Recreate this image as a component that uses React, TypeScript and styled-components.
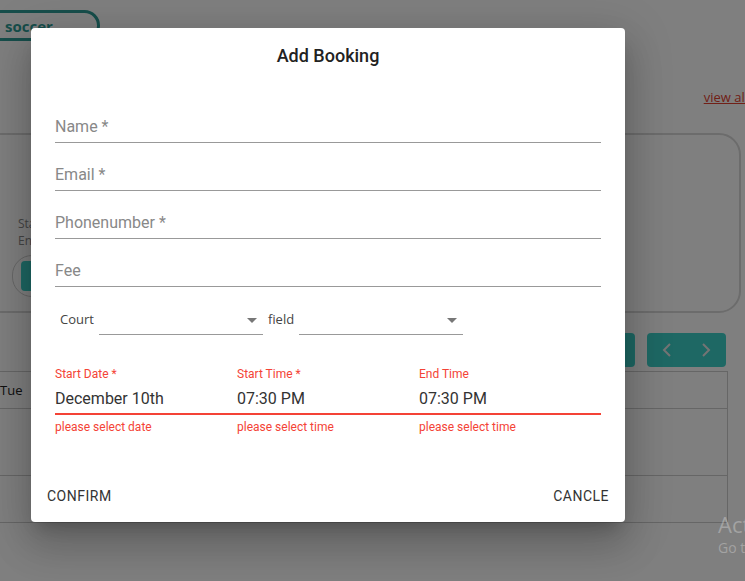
import { createGlobalStyle, styled } from "styled-components";

const GlobalStyle = createGlobalStyle`
  html, body {
    margin: 0;
    padding: 0;
    background: #fff;
  }
  body {
    font-family: Roboto, "Liberation Sans", sans-serif;
  }
`;

const TEAL = "#3cd0c8";
const TEAL_DARK = "#2e9c96";
const ERROR = "#f44336";

/* ---------- background page (dimmed behind the dialog) ---------- */

const Page = styled.div`
  position: relative;
  width: 745px;
  height: 581px;
  overflow: hidden;
  background: #fff;
  font-family: "Open Sans", "Liberation Sans", sans-serif;
`;

const PageBody = styled.div`
  display: flex;
  flex-flow: column nowrap;
  padding-top: 10px;
`;

const SportPill = styled.div`
  box-sizing: border-box;
  width: 122px;
  height: 31px;
  margin-left: -22px;
  border: 3px solid ${TEAL_DARK};
  border-radius: 16px;
  display: flex;
  align-items: center;
  padding-left: 24px;
  font-weight: 700;
  font-size: 15px;
  color: ${TEAL_DARK};
`;

const ViewAllRow = styled.div`
  display: flex;
  justify-content: flex-end;
  margin-top: 47px;
  margin-right: -3px;

  a {
    font-size: 13px;
    color: #e2402e;
    text-decoration: underline;
  }
`;

const SummaryCard = styled.div`
  box-sizing: border-box;
  height: 180px;
  margin: 27px 4px 0 -24px;
  border: 2px solid #d8d8d8;
  border-radius: 22px;
  display: flex;
  flex-flow: column nowrap;
  padding: 80px 0 0 40px;
  font-size: 12px;
  color: #888;
  line-height: 17px;
`;

const CardAction = styled.div`
  margin: 6px 0 0 -6px;
  width: 90px;
  height: 40px;
  border-radius: 20px;
  border: 1px solid #d0d0d0;
  display: flex;
  align-items: center;
  padding-left: 8px;

  span {
    display: block;
    width: 60px;
    height: 30px;
    border-radius: 4px;
    background: ${TEAL};
  }
`;

const Toolbar = styled.div`
  display: flex;
  justify-content: flex-end;
  gap: 12px;
  margin: 20px 19px 0 0;
`;

const TealButton = styled.div<{ $width: number }>`
  width: ${({ $width }) => $width}px;
  height: 34px;
  border-radius: 4px;
  background: ${TEAL};
  display: flex;
  align-items: center;
  justify-content: space-around;
  color: #e8e8e8;
`;

const Table = styled.div`
  display: flex;
  flex-flow: column nowrap;
  margin: 4px 17px 0 0;
  border-right: 1px solid #ccc;
  border-top: 1px solid #ccc;
  height: 150px;
`;

const TableRow = styled.div<{ $height: number }>`
  flex: none;
  height: ${({ $height }) => $height}px;
  border-bottom: 1px solid #ccc;
  display: flex;
  align-items: center;
  font-size: 13px;
  color: #222;
  padding-right: 16px;
`;

const Watermark = styled.div`
  position: absolute;
  left: 718px;
  top: 510px;
  color: rgba(255, 255, 255, 0.28);
  font-family: "Open Sans", "Liberation Sans", sans-serif;
  white-space: nowrap;
  z-index: 3;

  div:first-child {
    font-size: 22px;
    line-height: 28px;
  }
  div:last-child {
    font-size: 14px;
    line-height: 20px;
  }
`;

/* ---------- dialog ---------- */

const Backdrop = styled.div`
  position: absolute;
  inset: 0;
  background: rgba(0, 0, 0, 0.5);
  z-index: 1;
`;

const Dialog = styled.div`
  position: absolute;
  left: 31px;
  top: 28px;
  width: 594px;
  height: 494px;
  box-sizing: border-box;
  background: #fff;
  border-radius: 4px;
  z-index: 2;
  display: flex;
  flex-flow: column nowrap;
  box-shadow: 0 11px 15px -7px rgba(0, 0, 0, 0.2),
    0 24px 38px 3px rgba(0, 0, 0, 0.14), 0 9px 46px 8px rgba(0, 0, 0, 0.12);
  font-family: Roboto, "Liberation Sans", sans-serif;
`;

const Title = styled.h2`
  margin: 0;
  padding: 16px 24px 0;
  text-align: center;
  font-size: 18px;
  font-weight: 500;
  line-height: 24px;
  color: #222;
`;

const Content = styled.div`
  display: flex;
  flex-flow: column nowrap;
  padding: 27px 24px 0;
`;

const TextField = styled.div`
  height: 48px;
  box-sizing: border-box;
  border-bottom: 1px solid #999;
  display: flex;
  align-items: flex-end;
  padding-bottom: 6px;
  font-size: 16px;
  line-height: 19px;
  color: #888;
`;

const SelectRow = styled.div`
  display: flex;
  align-items: center;
  height: 32px;
  margin-top: 16px;
  padding-left: 5px;
  font-family: "Open Sans", "Liberation Sans", sans-serif;
  font-size: 13px;
  color: #444;
`;

const SelectLabel = styled.span`
  margin-right: 5px;
`;

const Select = styled.div`
  box-sizing: border-box;
  width: 164px;
  height: 32px;
  border-bottom: 1px solid #999;
  display: flex;
  align-items: center;
  justify-content: flex-end;
  padding: 2px 5px 0 0;
  margin-right: 5px;
  color: #777;
`;

const DateRow = styled.div`
  display: grid;
  grid-template-columns: repeat(3, 1fr);
  margin-top: 32px;
`;

const DateField = styled.div`
  display: flex;
  flex-flow: column nowrap;
`;

const DateLabel = styled.label`
  font-size: 12px;
  line-height: 14px;
  color: ${ERROR};
`;

const DateValue = styled.div`
  margin-top: 8px;
  padding-bottom: 5px;
  font-size: 16px;
  line-height: 19px;
  color: #333;
  border-bottom: 2px solid ${ERROR};
`;

const HelperText = styled.p`
  margin: 5px 0 0;
  font-size: 12px;
  line-height: 14px;
  color: ${ERROR};
`;

const Actions = styled.div`
  margin-top: auto;
  display: flex;
  justify-content: space-between;
  padding: 8px;
`;

const TextButton = styled.button`
  border: 0;
  background: none;
  padding: 6px 8px;
  height: 36px;
  font-family: Roboto, "Liberation Sans", sans-serif;
  font-size: 14px;
  font-weight: 400;
  letter-spacing: 0.5px;
  text-transform: uppercase;
  color: #333;
  cursor: pointer;
`;

const ArrowDown = () => (
  <svg width="24" height="24" viewBox="0 0 24 24" style={{ marginRight: -6 }}>
    <path d="M7 10l5 5 5-5z" fill="currentColor" />
  </svg>
);

const Chevron = ({ dir }: { dir: "left" | "right" }) => (
  <svg width="12" height="16" viewBox="0 0 12 16">
    <path
      d={dir === "left" ? "M9 2L3 8l6 6" : "M3 2l6 6-6 6"}
      fill="none"
      stroke="currentColor"
      strokeWidth="2"
    />
  </svg>
);

const dateFields = [
  { label: "Start Date *", value: "December 10th", helper: "please select date" },
  { label: "Start Time *", value: "07:30 PM", helper: "please select time" },
  { label: "End Time", value: "07:30 PM", helper: "please select time" },
];

export default function App() {
  return (
    <>
      <GlobalStyle />
      <Page>
        <PageBody>
          <SportPill>soccer</SportPill>
          <ViewAllRow>
            <a>view all</a>
          </ViewAllRow>
          <SummaryCard>
            <span>Start</span>
            <span>End</span>
            <CardAction>
              <span />
            </CardAction>
          </SummaryCard>
          <Toolbar>
            <TealButton $width={90} />
            <TealButton $width={79}>
              <Chevron dir="left" />
              <Chevron dir="right" />
            </TealButton>
          </Toolbar>
          <Table>
            <TableRow $height={36}>
              <span>Tue</span>
            </TableRow>
            <TableRow $height={66} />
            <TableRow $height={46} />
          </Table>
        </PageBody>

        <Backdrop />

        <Dialog>
          <Title>Add Booking</Title>
          <Content>
            <TextField>Name *</TextField>
            <TextField>Email *</TextField>
            <TextField>Phonenumber *</TextField>
            <TextField>Fee</TextField>

            <SelectRow>
              <SelectLabel>Court</SelectLabel>
              <Select>
                <ArrowDown />
              </Select>
              <SelectLabel>field</SelectLabel>
              <Select>
                <ArrowDown />
              </Select>
            </SelectRow>

            <DateRow>
              {dateFields.map((field) => (
                <DateField key={field.label}>
                  <DateLabel>{field.label}</DateLabel>
                  <DateValue>{field.value}</DateValue>
                  <HelperText>{field.helper}</HelperText>
                </DateField>
              ))}
            </DateRow>
          </Content>
          <Actions>
            <TextButton>Confirm</TextButton>
            <TextButton>Cancle</TextButton>
          </Actions>
        </Dialog>

        <Watermark>
          <div>Activate Windows</div>
          <div>Go to Settings to activate Windows.</div>
        </Watermark>
      </Page>
    </>
  );
}
